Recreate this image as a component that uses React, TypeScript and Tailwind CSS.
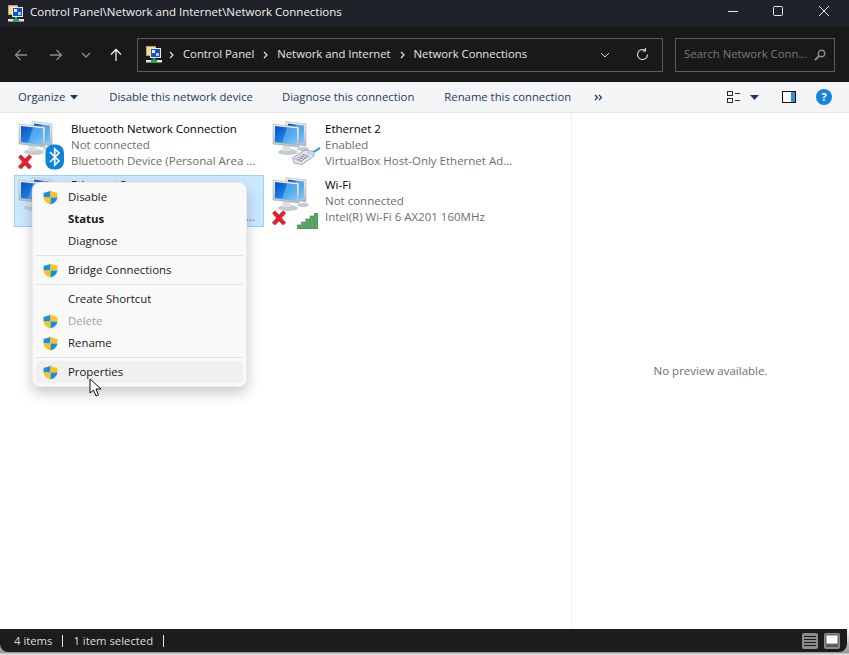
import React from "react";

const font = { fontFamily: '"Open Sans", "Noto Sans", sans-serif' };

function Cp() {
  return (
    <svg width="16" height="17" viewBox="0 0 16 17">
      <rect x="0.5" y="0.5" width="9" height="9" fill="#f3dc8a" stroke="#b9a560" />
      <rect x="4.5" y="2.5" width="10" height="9" fill="#1d4fc4" stroke="#e8edf5" />
      <rect x="6" y="4" width="3" height="3" fill="#e8edf5" />
      <rect x="10" y="7" width="3" height="3" fill="#a9c6f2" />
      <rect x="7" y="12" width="2" height="2" fill="#2aa84a" />
      <rect x="0" y="14" width="16" height="2.5" fill="#e6e6e6" />
      <rect x="5" y="13.5" width="6" height="3" fill="#27a54a" />
    </svg>
  );
}

function Monitors() {
  return (
    <svg width="40" height="40" viewBox="0 0 40 40" className="absolute left-0 top-0">
      <defs>
        <linearGradient id="scr" x1="0" y1="0" x2="1" y2="1">
          <stop offset="0" stopColor="#0a52c4" />
          <stop offset="0.6" stopColor="#1e86e8" />
          <stop offset="1" stopColor="#7cc8f8" />
        </linearGradient>
        <linearGradient id="frm" x1="0" y1="0" x2="0" y2="1">
          <stop offset="0" stopColor="#f2f4f6" />
          <stop offset="1" stopColor="#b4bac1" />
        </linearGradient>
      </defs>
      <ellipse cx="31" cy="28" rx="6" ry="2.2" fill="#c8ccd1" />
      <path d="M14 0.5 L34 3 L34 25 L14 22 Z" fill="url(#frm)" stroke="#98a0a8" strokeWidth="0.5" />
      <path d="M16 2.5 L32 4.7 L32 22 L16 19.5 Z" fill="url(#scr)" />
      <path d="M24 3.6 L32 4.7 L32 22 L20 20 Z" fill="#7fcbf7" opacity="0.55" />
      <ellipse cx="16" cy="31" rx="10" ry="3" fill="#c6cace" />
      <path d="M11 24 L18 25 L19 30 L10 30 Z" fill="#dcdfe3" />
      <path d="M1 3 L27 6 L27 26 L1 23 Z" fill="url(#frm)" stroke="#98a0a8" strokeWidth="0.5" />
      <path d="M3 5 L25 7.6 L25 23.8 L3 21 Z" fill="url(#scr)" />
      <path d="M15 6.4 L25 7.6 L25 23.8 L10 21.9 Z" fill="#7fcbf7" opacity="0.55" />
    </svg>
  );
}

function RedX() {
  return (
    <svg width="16" height="16" viewBox="0 0 16 16" className="absolute left-[-1px] top-[33px]">
      <path d="M1.5 3 L4 0.8 L8 5 L12 0.8 L14.8 3 L10.5 8 L14.8 12.8 L12 15 L8 11 L4 15 L1.2 12.8 L5.5 8 Z" fill="#e4202b" stroke="#b3161e" strokeWidth="0.5" />
    </svg>
  );
}

function BluetoothBadge() {
  return (
    <svg width="20" height="26" viewBox="0 0 20 26" className="absolute left-[27px] top-[23px]">
      <rect x="0.5" y="0.5" width="18.5" height="25" rx="8" fill="#0d84dc" />
      <path d="M5 8 L14 17 L9.7 21 L9.7 5 L14 9 L5 18" fill="none" stroke="#fff" strokeWidth="1.7" />
    </svg>
  );
}

function Plug() {
  return (
    <svg width="28" height="19" viewBox="0 0 28 19" className="absolute left-[20px] top-[26px]">
      <path d="M18 6 C21 6 24 4 28 1" stroke="#35a0e6" strokeWidth="2.2" fill="none" />
      <path d="M0.5 11 L13 3 L22 4.5 L22 9 L10 17.5 L2 16 Z" fill="#e4e8ec" stroke="#7b858f" strokeWidth="0.7" />
      <path d="M2.5 11.5 L9.5 14 M5 10 L12 12.5 M7.5 8.5 L14.5 11 M10 7 L17 9.5 M5 14.5 L12.5 8 M8 15.5 L15.5 9" stroke="#7f8994" strokeWidth="0.8" />
      <path d="M14 4.5 L21.5 6 L20.5 8 L15.5 6.5 Z" fill="#a6d6f5" />
    </svg>
  );
}

function Signal() {
  const bars = [
    [0.5, 12, 4],
    [4.7, 9, 7],
    [8.9, 6, 10],
    [13.1, 3, 13],
    [17.3, 0.5, 15.5],
  ];
  return (
    <svg width="21" height="16" viewBox="0 0 21 16" className="absolute left-[25px] top-[36px]">
      {bars.map(([x, y, h]) => (
        <rect key={x} x={x} y={y} width="3.4" height={h} fill="#5aa864" stroke="#2c7a38" strokeWidth="0.6" />
      ))}
    </svg>
  );
}

function Shield() {
  return (
    <svg width="15" height="15" viewBox="0 0 15 15" className="shrink-0">
      <path d="M7.5 0.5 C5.5 2 3 2.6 0.6 2.7 L0.6 7.5 L7.5 7.5 Z" fill="#1c8fd9" />
      <path d="M7.5 0.5 C9.5 2 12 2.6 14.4 2.7 L14.4 7.5 L7.5 7.5 Z" fill="#fcc419" />
      <path d="M0.6 7.5 C0.9 11 3.8 13.3 7.5 14.6 L7.5 7.5 Z" fill="#fcc419" />
      <path d="M14.4 7.5 C14.1 11 11.2 13.3 7.5 14.6 L7.5 7.5 Z" fill="#1c8fd9" />
    </svg>
  );
}

function Item({ title, sub, desc, badge, x, selected }: { title: string; sub: string; desc: string; badge?: React.ReactNode; x?: boolean; selected?: boolean }) {
  return (
    <div className={`flex h-[52px] w-[250px] items-center border pl-[3px] ${selected ? "border-[#99d1ff] bg-[#cce8ff]" : "border-transparent"}`}>
      <div className="relative h-[48px] w-[53px] shrink-0">
        <Monitors />
        {x && <RedX />}
        {badge}
      </div>
      <div className="min-w-0 text-[11.5px] leading-[16px] whitespace-nowrap">
        <div className="text-black">{title}</div>
        <div className="text-[#6d6d6d]">{sub}</div>
        <div className="text-[#6d6d6d]">{desc}</div>
      </div>
    </div>
  );
}

function MenuRow({ label, shield, bold, disabled, hover }: { label: string; shield?: boolean; bold?: boolean; disabled?: boolean; hover?: boolean }) {
  return (
    <div className={`flex h-[22px] items-center rounded-[4px] pl-[7px] text-[11.4px] ${hover ? "bg-[#f0f0f0]" : ""} ${bold ? "font-bold" : ""} ${disabled ? "text-[#a0a0a0]" : "text-[#1a1a1a]"}`}>
      <span className="flex w-[25px] shrink-0">{shield && <Shield />}</span>
      {label}
    </div>
  );
}

function Sep() {
  return (
    <div className="flex h-[7px] items-center">
      <div className="h-px w-full bg-[#e2e2e2]" />
    </div>
  );
}

function Chev() {
  return (
    <svg width="5" height="8" viewBox="0 0 5 8" className="shrink-0">
      <path d="M1 1 L4 4 L1 7" fill="none" stroke="#e6e6e6" strokeWidth="1.2" />
    </svg>
  );
}

export default function App() {
  return (
    <div style={font} className="relative flex h-[655px] w-[849px] flex-col overflow-hidden bg-white">
      <div className="flex h-[27px] shrink-0 items-center bg-[#1f2228] pl-[8px] pr-[1px] text-[11.5px] text-[#f2f2f2]">
        <Cp />
        <span className="mb-[3px] ml-[6px]">Control Panel\Network and Internet\Network Connections</span>
        <div className="ml-auto flex items-center">
          <svg width="46" height="27" viewBox="0 0 46 27"><path d="M18 11.5 H28" stroke="#e8e8e8" strokeWidth="1" /></svg>
          <svg width="46" height="27" viewBox="0 0 46 27"><rect x="17.5" y="6.5" width="9" height="9" rx="1" fill="none" stroke="#e8e8e8" strokeWidth="1" /></svg>
          <svg width="46" height="27" viewBox="0 0 46 27"><path d="M17 6 L27 16 M27 6 L17 16" stroke="#e8e8e8" strokeWidth="1" /></svg>
        </div>
      </div>

      <div className="flex h-[55px] shrink-0 items-center bg-[#191919] pl-[14px] text-[11.3px]">
        <svg width="14" height="14" viewBox="0 0 14 14"><path d="M13 7 H1.5 M6.5 2 L1.5 7 L6.5 12" fill="none" stroke="#8a8a8a" strokeWidth="1.3" /></svg>
        <svg width="14" height="14" viewBox="0 0 14 14" className="ml-[21px]"><path d="M1 7 H12.5 M7.5 2 L12.5 7 L7.5 12" fill="none" stroke="#8a8a8a" strokeWidth="1.3" /></svg>
        <svg width="10" height="6" viewBox="0 0 10 6" className="ml-[18px]"><path d="M1 1 L5 5 L9 1" fill="none" stroke="#8a8a8a" strokeWidth="1.3" /></svg>
        <svg width="14" height="14" viewBox="0 0 14 14" className="ml-[18px]"><path d="M7 13 V1.5 M2 6.5 L7 1.5 L12 6.5" fill="none" stroke="#efefef" strokeWidth="1.3" /></svg>
        <div className="ml-[14px] flex h-[34px] w-[526px] items-center border border-[#5c5c5c] pl-[8px] text-[#e6e6e6]">
          <Cp />
          <span className="ml-[7px] flex"><Chev /></span>
          <span className="ml-[9px]">Control Panel</span>
          <span className="ml-[9px] flex"><Chev /></span>
          <span className="ml-[9px]">Network and Internet</span>
          <span className="ml-[9px] flex"><Chev /></span>
          <span className="ml-[9px]">Network Connections</span>
          <svg width="10" height="6" viewBox="0 0 10 6" className="ml-auto"><path d="M1 1 L5 5 L9 1" fill="none" stroke="#cfcfcf" strokeWidth="1" /></svg>
          <svg width="13" height="13" viewBox="0 0 13 13" className="ml-[26px] mr-[13px]"><path d="M11.5 6.5 A5 5 0 1 1 9 2.2 M9.5 0 V3 H6.5" fill="none" stroke="#d8d8d8" strokeWidth="1.1" /></svg>
        </div>
        <div className="ml-[12px] flex h-[34px] w-[160px] items-center justify-between border border-[#5c5c5c] pl-[8px] pr-[8px] text-[#7a7a7a]">
          <span className="whitespace-nowrap">Search Network Conn...</span>
          <svg width="12" height="12" viewBox="0 0 12 12" className="shrink-0"><circle cx="7.5" cy="4.5" r="3.2" fill="none" stroke="#8c8c8c" strokeWidth="1.4" /><path d="M5 7 L1 11" stroke="#8c8c8c" strokeWidth="1.8" /></svg>
        </div>
      </div>

      <div className="flex h-[31px] shrink-0 items-center border-b border-[#e6e6e6] bg-[#f4f5f7] pl-[18px] text-[11.3px] text-[#1e395b]">
        <span>Organize</span>
        <svg width="8" height="5" viewBox="0 0 8 5" className="ml-[5px]"><path d="M0 0 H8 L4 4.5 Z" fill="#1e395b" /></svg>
        <span className="ml-[31px]">Disable this network device</span>
        <span className="ml-[29px]">Diagnose this connection</span>
        <span className="ml-[30px]">Rename this connection</span>
        <svg width="9" height="7" viewBox="0 0 9 7" className="ml-[23px]"><path d="M1 1 L3.5 3.5 L1 6 M5 1 L7.5 3.5 L5 6" fill="none" stroke="#1e395b" strokeWidth="1.2" /></svg>
        <div className="ml-auto flex items-center pr-[17px]">
          <svg width="14" height="14" viewBox="0 0 14 14">
            <rect x="0.5" y="1.5" width="5" height="4" fill="none" stroke="#2a2a2a" />
            <rect x="0.5" y="8.5" width="5" height="4" fill="none" stroke="#2a2a2a" />
            <path d="M8 3.5 H13 M8 10.5 H13" stroke="#2a2a2a" />
          </svg>
          <svg width="9" height="5" viewBox="0 0 9 5" className="ml-[9px]"><path d="M0 0 H9 L4.5 5 Z" fill="#1e395b" /></svg>
          <svg width="14" height="12" viewBox="0 0 14 12" className="ml-[23px]">
            <rect x="0.5" y="0.5" width="13" height="11" fill="#fff" stroke="#111" />
            <rect x="9" y="1" width="4" height="10" fill="#2a8fe0" />
          </svg>
          <div className="ml-[20px] flex h-[16px] w-[16px] items-center justify-center rounded-full bg-[#1584dc] text-[11px] font-bold text-white">?</div>
        </div>
      </div>

      <div className="flex min-h-0 flex-1">
        <div className="w-[571px] shrink-0 pl-[14px] pt-[6px]">
          <div className="grid grid-cols-[250px_250px] gap-x-[4px] gap-y-[4px]">
            <Item x badge={<BluetoothBadge />} title="Bluetooth Network Connection" sub="Not connected" desc="Bluetooth Device (Personal Area ..." />
            <Item badge={<Plug />} title="Ethernet 2" sub="Enabled" desc="VirtualBox Host-Only Ethernet Ad..." />
            <Item selected title="Ethernet 3" sub="Enabled" desc="Realtek Gaming GbE Family Cont..." />
            <Item x badge={<Signal />} title="Wi-Fi" sub="Not connected" desc="Intel(R) Wi-Fi 6 AX201 160MHz" />
          </div>
        </div>
        <div className="flex flex-1 items-center justify-center border-l border-[#efefef] text-[11.5px] text-[#6d6d6d]">
          No preview available.
        </div>
      </div>

      <div className="shrink-0 bg-gradient-to-b from-[#ffffff] to-[#9a9a9a]">
        <div className="mr-[2px] flex h-[23px] items-center rounded-b-[8px] bg-[#1c1c1c] pl-[14px] text-[11.3px] text-[#dcdcdc]">
          <span className="mt-[1px]">4 items</span>
          <span className="ml-[10px] h-[12px] w-px bg-[#e6e6e6]" />
          <span className="ml-[10px] mt-[1px]">1 item selected</span>
          <span className="ml-[10px] h-[12px] w-px bg-[#e6e6e6]" />
          <div className="ml-auto flex items-center gap-[6px] pr-[7px]">
            <svg width="16" height="16" viewBox="0 0 16 16">
              <rect width="16" height="16" rx="2" fill="#8c8c8c" />
              <path d="M2 3.5 H14 M2 6.5 H14 M2 9.5 H14 M2 12.5 H14" stroke="#1c1c1c" />
            </svg>
            <svg width="16" height="16" viewBox="0 0 16 16">
              <rect width="16" height="16" rx="2" fill="#8c8c8c" />
              <rect x="2" y="2" width="12" height="9" fill="#fff" stroke="#1c1c1c" strokeWidth="0.6" />
              <path d="M2 13 H14" stroke="#1c1c1c" />
            </svg>
          </div>
        </div>
      </div>
      <div className="h-[3px] shrink-0 bg-gradient-to-b from-[#8c8c8c] to-[#f2f2f2]" />

      <div className="absolute left-[32px] top-[182px] w-[215px] rounded-[8px] border border-[#ececec] bg-[#f9f9f9] p-[3px] shadow-[0_6px_14px_rgba(0,0,0,0.22)]">
        <MenuRow shield label="Disable" />
        <MenuRow bold label="Status" />
        <MenuRow label="Diagnose" />
        <Sep />
        <MenuRow shield label="Bridge Connections" />
        <Sep />
        <MenuRow label="Create Shortcut" />
        <MenuRow shield disabled label="Delete" />
        <MenuRow shield label="Rename" />
        <Sep />
        <MenuRow shield hover label="Properties" />
      </div>

      <svg width="14" height="20" viewBox="0 0 14 20" className="absolute left-[89px] top-[378px]">
        <path d="M1 1 V15 L4.5 12 L7 18 L9.5 17 L7 11 L12 11 Z" fill="#fff" stroke="#111" strokeWidth="1" />
      </svg>
    </div>
  );
}
